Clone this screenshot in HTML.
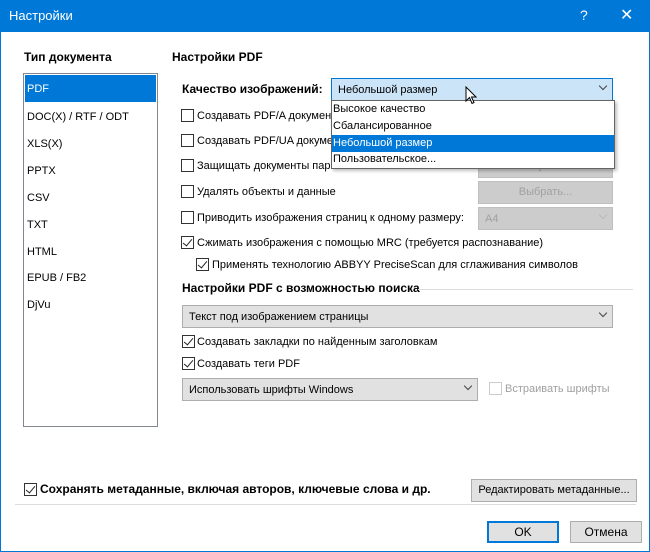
<!DOCTYPE html>
<html><head><meta charset="utf-8"><style>
*{margin:0;padding:0;box-sizing:border-box}
body{width:650px;height:552px;overflow:hidden;background:#fff;font-family:"Liberation Sans","DejaVu Sans",sans-serif;font-size:11px;color:#000;position:relative}
.a{position:absolute;white-space:nowrap}
.win{position:absolute;left:0;top:0;width:650px;height:552px;border:1px solid #0078d7}
.title{position:absolute;left:0;top:0;width:650px;height:32px;background:#0078d7;color:#fff}
b{font-weight:bold;font-size:12px}
.cb{position:absolute;width:13px;height:13px;border:1px solid #333;background:#fff}
.cb.c::after{content:"";position:absolute;left:3px;top:0px;width:4px;height:8px;border:solid #222;border-width:0 1.3px 1.3px 0;transform:rotate(40deg)}
.combo{position:absolute;border:1px solid #adadad;background:#e1e1e1;height:23px;padding:4px 6px;line-height:14px;white-space:nowrap}
.combo .ar{position:absolute;right:6px;top:4px;width:6px;height:6px;border:solid #444;border-width:0 1px 1px 0;transform:rotate(45deg)}
.btn{position:absolute;border:1px solid #adadad;background:#e1e1e1;text-align:center;line-height:20px;white-space:nowrap}
.dis{color:#a0a0a0;background:#ccc;border-color:#bfbfbf}
.li{position:absolute;left:27px}
</style></head><body>
<div class="win"></div>
<div class="title"><span class="a" style="left:9px;top:8px;font-size:13px">Настройки</span><span class="a" style="left:580px;top:7px;font-size:14px">?</span><span class="a" style="left:620px;top:5px;font-size:16px">✕</span></div>

<b class="a" style="left:24px;top:50px">Тип документа</b>
<b class="a" style="left:172px;top:50px">Настройки PDF</b>

<div class="a" style="left:23px;top:73px;width:135px;height:354px;border:1px solid #828790"></div>
<div class="a" style="left:25px;top:75px;width:131px;height:27px;background:#0078d7"></div>
<span class="li a" style="top:83px;color:#fff">PDF</span>
<span class="li a" style="top:111px">DOC(X) / RTF / ODT</span>
<span class="li a" style="top:138px">XLS(X)</span>
<span class="li a" style="top:165px">PPTX</span>
<span class="li a" style="top:192px">CSV</span>
<span class="li a" style="top:219px">TXT</span>
<span class="li a" style="top:246px">HTML</span>
<span class="li a" style="top:272px">EPUB / FB2</span>
<span class="li a" style="top:299px">DjVu</span>

<b class="a" style="left:182px;top:82px">Качество изображений:</b>
<div class="combo" style="left:331px;top:78px;width:282px;background:#cce4f7;border-color:#0078d7">Небольшой размер<span class="ar"></span></div>

<div class="cb" style="left:181px;top:109px"></div><span class="a" style="left:197px;top:110px">Создавать PDF/A документы</span>
<div class="cb" style="left:181px;top:134px"></div><span class="a" style="left:197px;top:135px">Создавать PDF/UA документы</span>
<div class="cb" style="left:181px;top:159px"></div><span class="a" style="left:197px;top:160px">Защищать документы паролем</span>
<div class="btn dis" style="left:478px;top:155px;width:135px;height:23px">Настроить...</div>
<div class="cb" style="left:181px;top:185px"></div><span class="a" style="left:197px;top:186px">Удалять объекты и данные</span>
<div class="btn dis" style="left:478px;top:181px;width:135px;height:23px">Выбрать...</div>
<div class="cb" style="left:181px;top:211px"></div><span class="a" style="left:197px;top:212px">Приводить изображения страниц к одному размеру:</span>
<div class="combo dis" style="left:478px;top:207px;width:135px;color:#a0a0a0">A4<span class="ar" style="border-color:#bbb"></span></div>
<div class="cb c" style="left:181px;top:236px"></div><span class="a" style="left:197px;top:237px">Сжимать изображения с помощью MRC (требуется распознавание)</span>
<div class="cb c" style="left:196px;top:258px"></div><span class="a" style="left:212px;top:259px">Применять технологию ABBYY PreciseScan для сглаживания символов</span>

<div class="a" style="left:331px;top:100px;width:284px;height:69px;background:#fff;border:1px solid #646464;box-shadow:2px 2px 3px rgba(0,0,0,.25)"></div>
<span class="a" style="left:333px;top:103px">Высокое качество</span>
<span class="a" style="left:333px;top:120px">Сбалансированное</span>
<div class="a" style="left:332px;top:135px;width:282px;height:17px;background:#0078d7"></div>
<span class="a" style="left:333px;top:137px;color:#fff">Небольшой размер</span>
<span class="a" style="left:333px;top:153px">Пользовательское...</span>
<svg class="a" style="left:465px;top:86px" width="14" height="20" viewBox="0 0 14 20"><path d="M1 1 L1 15 L4.5 11.5 L7 17.5 L9 16.5 L6.5 11 L11 11 Z" fill="#fff" stroke="#000"/></svg>

<b class="a" style="left:182px;top:281px">Настройки PDF с возможностью поиска</b>
<div class="a" style="left:418px;top:289px;width:215px;height:1px;background:#dcdcdc"></div>
<div class="combo" style="left:182px;top:305px;width:431px">Текст под изображением страницы<span class="ar"></span></div>
<div class="cb c" style="left:182px;top:335px"></div><span class="a" style="left:197px;top:336px">Создавать закладки по найденным заголовкам</span>
<div class="cb c" style="left:182px;top:357px"></div><span class="a" style="left:197px;top:358px">Создавать теги PDF</span>
<div class="combo" style="left:182px;top:378px;width:296px">Использовать шрифты Windows<span class="ar"></span></div>
<div class="cb" style="left:489px;top:382px;border-color:#ccc"></div><span class="a" style="left:505px;top:383px;color:#a0a0a0">Встраивать шрифты</span>

<div class="a" style="left:15px;top:504px;width:621px;height:1px;background:#dcdcdc"></div>
<div class="cb c" style="left:24px;top:483px"></div><b class="a" style="left:40px;top:482px">Сохранять метаданные, включая авторов, ключевые слова и др.</b>
<div class="btn" style="left:471px;top:479px;width:166px;height:23px;line-height:21px">Редактировать метаданные...</div>
<div class="btn" style="left:487px;top:521px;width:72px;height:22px;border:2px solid #0078d7;line-height:18px;font-size:12px">OK</div>
<div class="btn" style="left:570px;top:521px;width:72px;height:22px;font-size:12px">Отмена</div>
</body></html>
